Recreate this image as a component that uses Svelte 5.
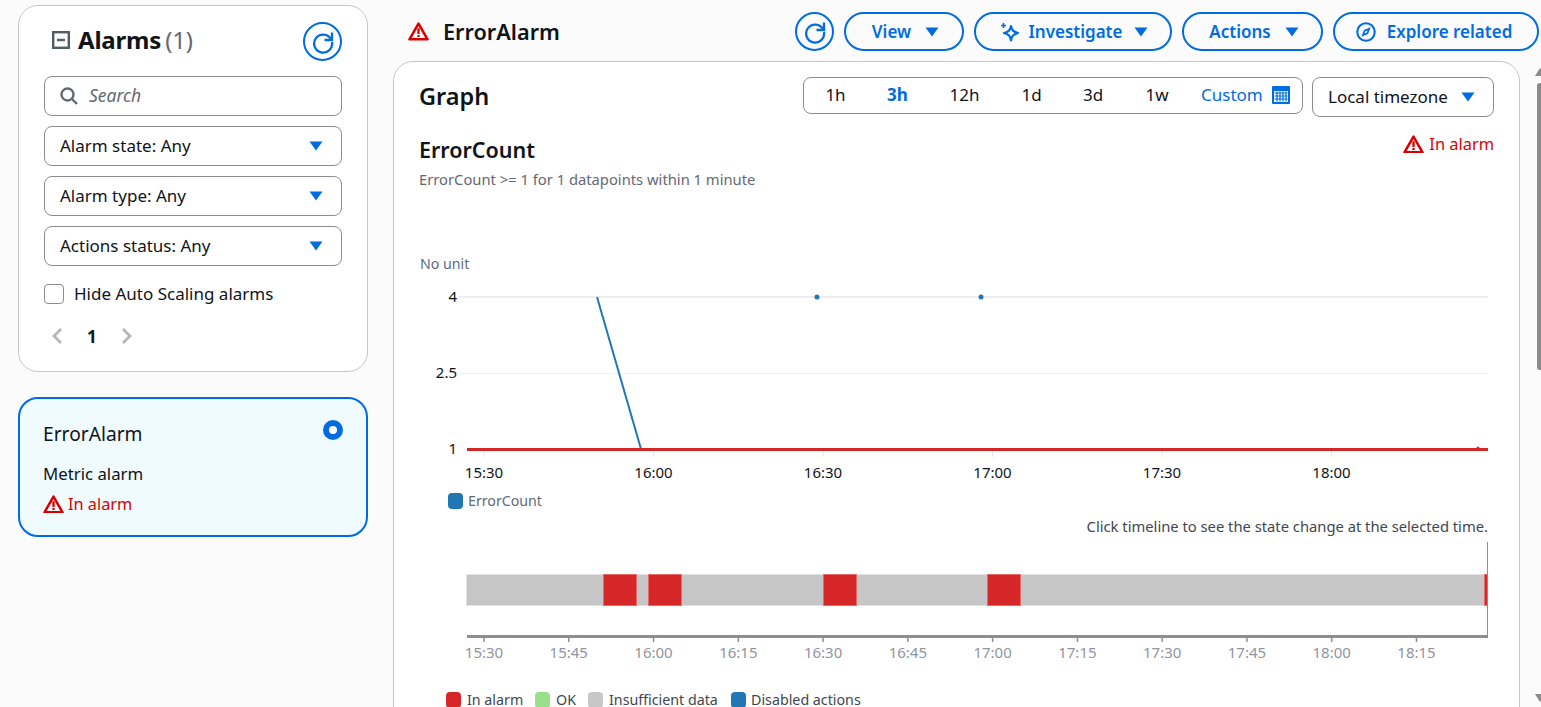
<script>
  const filters = ['Alarm state: Any', 'Alarm type: Any', 'Actions status: Any'];
  const ranges = [
    { label: '1h', w: 65 }, { label: '3h', w: 59, active: true }, { label: '12h', w: 75 },
    { label: '1d', w: 59 }, { label: '3d', w: 64 }, { label: '1w', w: 64 }
  ];
  const axisTop = [['15:30', 484], ['16:00', 653.5], ['16:30', 823], ['17:00', 992.5], ['17:30', 1162], ['18:00', 1331.5]];
  const axisBottom = ['15:30', '15:45', '16:00', '16:15', '16:30', '16:45', '17:00', '17:15', '17:30', '17:45', '18:00', '18:15']
    .map((t, i) => [t, 484 + i * 84.77]);
  const reds = [[603, 34], [648, 34], [823, 34], [987, 34], [1484, 4]];
  const legend = [
    ['In alarm', 446, 467, '#d62728'], ['OK', 535, 556, '#98df8a'],
    ['Insufficient data', 588, 609, '#c7c7c7'], ['Disabled actions', 731, 751, '#1f77b4']
  ];
</script>

{#snippet caret()}
  <svg class="caret" viewBox="0 0 14 10" width="14" height="10"><path d="M0.5 0.5h13L7 9.5z" fill="#006ce0" /></svg>
{/snippet}

{#snippet warn(size)}
  <svg viewBox="0 0 20 18" width={size} height={size * 0.9} class="warn">
    <path d="M10 1.6 1.4 16.500h17.200z" fill="none" stroke="#db0000" stroke-width="2.400" stroke-linejoin="round" />
    <path d="M10 6v5.400M10 12.400v2" fill="none" stroke="#db0000" stroke-width="2.200" />
  </svg>
{/snippet}

{#snippet refresh()}
  <button class="round" aria-label="Refresh">
    <svg viewBox="0 0 24 24" width="24" height="24">
      <path d="M20 9.200A9 9 0 1 0 21 12" fill="none" stroke="#006ce0" stroke-width="2.300" />
      <path d="M21 2.500v7.500h-7.500" fill="none" stroke="#006ce0" stroke-width="2.300" />
    </svg>
  </button>
{/snippet}

<div class="page">
  <aside class="side">
    <section class="panel">
      <div class="panel-head">
        <div class="panel-title">
          <svg viewBox="0 0 18 18" width="18" height="18"><rect x="1.200" y="1.200" width="15.600" height="15.600" fill="none" stroke="#545b64" stroke-width="2.400" /><path d="M5 9h8" stroke="#545b64" stroke-width="2.400" /></svg>
          <h2>Alarms <span>(1)</span></h2>
        </div>
        {@render refresh()}
      </div>
      <div class="search">
        <svg viewBox="0 0 18 18" width="18" height="18"><circle cx="7.500" cy="7.500" r="6" fill="none" stroke="#656871" stroke-width="2.400" /><path d="M12 12l5 5" stroke="#656871" stroke-width="2.400" /></svg>
        <span>Search</span>
      </div>
      {#each filters as f}
        <div class="select"><span>{f}</span>{@render caret()}</div>
      {/each}
      <label class="check"><span class="box"></span><span class="check-text">Hide Auto Scaling alarms</span></label>
      <div class="pager">
        <svg viewBox="0 0 12 16" width="12" height="16"><path d="M10 1 3 8l7 7" fill="none" stroke="#b4b4bb" stroke-width="2.600" /></svg>
        <b>1</b>
        <svg viewBox="0 0 12 16" width="12" height="16"><path d="M2 1l7 7-7 7" fill="none" stroke="#b4b4bb" stroke-width="2.600" /></svg>
      </div>
    </section>

    <section class="card">
      <div class="card-head">
        <span class="card-name">ErrorAlarm</span>
        <span class="radio"></span>
      </div>
      <div class="card-type">Metric alarm</div>
      <div class="state">{@render warn(21)}<span>In alarm</span></div>
    </section>
  </aside>

  <main class="main">
    <header class="top">
      <div class="title">{@render warn(21)}<h1>ErrorAlarm</h1></div>
      <div class="actions">
        {@render refresh()}
        <button class="pill view">View {@render caret()}</button>
        <button class="pill investigate">
          <svg viewBox="0 0 20 20" width="20" height="20"><path d="M11 4c.8 4.200 2.200 5.800 7 7-4.800 1.200-6.200 2.800-7 7.500-.8-4.700-2.200-6.300-7-7.500 4.800-1.200 6.200-2.800 7-7z" fill="none" stroke="#006ce0" stroke-width="2.200" stroke-linejoin="round" /><path d="M3.500 1v5M1 3.500h5" stroke="#006ce0" stroke-width="1.600" /></svg>
          Investigate {@render caret()}
        </button>
        <button class="pill act">Actions {@render caret()}</button>
        <button class="pill explore">
          <svg viewBox="0 0 19 19" width="20" height="20"><circle cx="9.500" cy="9.500" r="8.300" fill="none" stroke="#006ce0" stroke-width="2" /><path d="M12.500 6.500 10.800 10.800 6.500 12.500 8.200 8.200z" fill="none" stroke="#006ce0" stroke-width="1.600" /></svg>
          Explore related
        </button>
      </div>
    </header>

    <section class="graph">
      <div class="graph-head">
        <h2>Graph</h2>
        <div class="controls">
          <div class="segment">
            {#each ranges as r}
              <span class="seg" class:active={r.active} style="width:{r.w}px">{r.label}</span>
            {/each}
            <span class="custom">Custom
              <svg viewBox="0 0 18 18" width="18" height="18"><rect x="0" y="0" width="18" height="18" rx="1" fill="#006ce0" /><rect x="2" y="5" width="14" height="11" fill="#fff" /><path d="M2.500 7h13M2.500 10h13M2.500 13h13M5 5.500v10M8 5.500v10M11 5.500v10M14 5.500v10" stroke="#006ce0" stroke-width="1.200" /></svg>
            </span>
          </div>
          <div class="zone"><span>Local timezone</span>{@render caret()}</div>
        </div>
      </div>

      <div class="metric">
        <div>
          <h3>ErrorCount</h3>
          <p>ErrorCount &gt;= 1 for 1 datapoints within 1 minute</p>
        </div>
        <div class="state">{@render warn(21)}<span>In alarm</span></div>
      </div>

      <svg class="chart" viewBox="394 250 1126 457" width="1126" height="457">
        <text x="420" y="269" class="t muted">No unit</text>
        <line x1="459" x2="1488" y1="297" y2="297" stroke="#eeeeee" stroke-width="2" />
        <line x1="459" x2="1488" y1="373.500" y2="373.500" stroke="#eeeeee" />
        <text x="457" y="302" class="t num" text-anchor="end">4</text>
        <text x="457" y="378" class="t num" text-anchor="end">2.5</text>
        <text x="457" y="454" class="t num" text-anchor="end">1</text>

        {#each axisTop as [label, x]}
          <line x1={x} x2={x} y1="451" y2="457" stroke="#e6e6e6" />
          <text {x} y="478" class="t num" text-anchor="middle">{label}</text>
        {/each}

        <line x1="597" y1="297" x2="641" y2="449" stroke="#1f77b4" stroke-width="2" />
        <circle cx="817" cy="297" r="2.500" fill="#1f77b4" />
        <circle cx="981" cy="297" r="2.500" fill="#1f77b4" />
        <rect x="467" y="448" width="1021" height="3" fill="#d62728" />
        <circle cx="1478" cy="448" r="1.500" fill="#d62728" />

        <rect x="448" y="493" width="15" height="16" rx="4" fill="#1f77b4" />
        <text x="468" y="506" class="t muted">ErrorCount</text>

        <text x="1488" y="532" class="t dim long" text-anchor="end">Click timeline to see the state change at the selected time.</text>

        <rect x="466.500" y="574.500" width="1021" height="31" fill="#c6c6c6" stroke="#e2e2e2" />
        {#each reds as [x, w]}
          <rect x={x + 0.5} y="574.500" width={w - 1} height="31" fill="#d62728" stroke="#ea6a6b" />
        {/each}

        <line x1="1487.500" x2="1487.500" y1="542" y2="636" stroke="#8d8d94" />
        <rect x="467" y="635" width="1021" height="3" fill="#8d8d94" />
        {#each axisBottom as [label, x]}
          <line x1={x} x2={x} y1="637" y2="642" stroke="#8d8d94" stroke-width="1.500" />
          <text {x} y="658" class="t faint num" text-anchor="middle">{label}</text>
        {/each}

        {#each legend as [label, x, tx, color]}
          <rect {x} y="692" width="15" height="16" rx="4" fill={color} />
          <text x={tx} y="705" class="t dim leg">{label}</text>
        {/each}
      </svg>
    </section>
  </main>

  <div class="scrollbar">
    <span class="up"></span>
    <span class="thumb"></span>
    <span class="down"></span>
  </div>
</div>

<style>
  :global(body) {
    margin: 0;
    background: #fbfbfb;
    overflow: hidden;
  }
  .page {
    display: flex;
    position: relative;
    width: 1541px;
    height: 707px;
    overflow: hidden;
    background: #fbfbfb;
    color: #0f141a;
    font-family: "Noto Sans", "Open Sans", sans-serif;
    font-size: 17px;
    box-sizing: border-box;
    padding-left: 18px;
  }
  h1, h2, h3, p { margin: 0; }
  button { font: inherit; background: none; padding: 0; cursor: pointer; }

  .side {
    flex: 0 0 350px;
    padding-top: 5px;
    display: flex;
    flex-direction: column;
    gap: 25px;
  }
  .panel {
    box-sizing: border-box;
    height: 367px;
    flex: none;
    background: #fff;
    border: 1px solid #c6c6cd;
    border-radius: 20px;
    padding: 16px 25px 0;
  }
  .panel-head {
    display: flex;
    justify-content: space-between;
    align-items: center;
    height: 39px;
    margin-bottom: 15px;
  }
  .panel-title {
    display: flex;
    align-items: center;
    gap: 8px;
    padding-left: 8px;
    margin-top: -4px;
  }
  .panel-title h2 { font-size: 24px; font-weight: 700; line-height: 30px; letter-spacing: -0.2px; word-spacing: -2px; }
  .panel-title h2 span { font-weight: 400; color: #656871; }
  .round {
    box-sizing: border-box;
    width: 39px;
    height: 39px;
    flex: none;
    border: 2px solid #006ce0;
    border-radius: 50%;
    display: flex;
    align-items: center;
    justify-content: center;
  }
  .search, .select, .zone {
    box-sizing: border-box;
    display: flex;
    align-items: center;
    height: 40px;
    border: 1px solid #8c8c94;
    border-radius: 8px;
    background: #fff;
  }
  .search span, .select span, .zone span, .check-text { margin-top: -2px; }
  .search { padding-left: 15px; gap: 11px; margin-bottom: 10px; }
  .search span { font-style: italic; color: #656871; font-size: 17.500px; }
  .select { justify-content: space-between; padding: 0 18px 0 15px; margin-bottom: 10px; }
  .check {
    display: flex;
    align-items: center;
    gap: 10px;
    margin-top: 18px;
    height: 20px;
  }
  .box {
    box-sizing: border-box;
    width: 20px;
    height: 20px;
    border: 1px solid #8c8c94;
    border-radius: 4px;
  }
  .pager {
    display: flex;
    align-items: center;
    gap: 24px;
    padding-left: 7px;
    margin-top: 22px;
    height: 20px;
  }
  .pager b { font-size: 17px; }
  .card {
    box-sizing: border-box;
    height: 140px;
    flex: none;
    background: #f0fbff;
    border: 2px solid #006ce0;
    border-radius: 20px;
    padding: 21px 23px 0;
  }
  .card-head { display: flex; justify-content: space-between; align-items: flex-start; height: 28px; }
  .card-name { font-size: 19.200px; line-height: 28px; }
  .radio {
    box-sizing: border-box;
    width: 20px;
    height: 20px;
    border: 6px solid #006ce0;
    border-radius: 50%;
    background: #fff;
  }
  .card-type { margin-top: 14px; line-height: 24px; font-size: 16.800px; }
  .state {
    display: flex;
    align-items: center;
    gap: 4px;
    color: #db0000;
    line-height: 24px;
    font-size: 16.300px;
  }
  .card .state { margin-top: 6px; }
  .warn { flex: none; }

  .main { flex: 0 0 1127px; margin-left: 25px; display: flex; flex-direction: column; }
  .top {
    position: relative;
    flex: none;
    display: flex;
    height: 61px;
    width: 1146px;
    box-sizing: border-box;
    padding-top: 12px;
    justify-content: space-between;
  }
  .title { display: flex; align-items: center; gap: 14px; padding-left: 15px; height: 39px; }
  .title h1 { font-size: 21.700px; font-weight: 600; }
  .actions { display: flex; gap: 10px; }
  .pill {
    box-sizing: border-box;
    height: 39px;
    border: 2px solid #006ce0;
    border-radius: 20px;
    color: #006ce0;
    font-weight: 600;
    display: flex;
    align-items: center;
    justify-content: center;
    gap: 8px;
    white-space: nowrap;
  }
  .pill .caret { margin-left: 6px; }
  .view { width: 120px; padding-left: 3px; }
  .investigate { width: 198px; padding-left: 2px; gap: 9px; }
  .investigate .caret { margin-left: 3px; }
  .act { width: 141px; padding-left: 3px; }
  .explore { width: 206px; gap: 11px; padding-right: 4px; }

  .graph {
    box-sizing: border-box;
    flex: none;
    height: 700px;
    width: 1127px;
    background: #fff;
    border: 1px solid #c6c6cd;
    border-radius: 20px;
    padding: 15px 25px 0 25px;
  }
  .graph-head { display: flex; justify-content: space-between; align-items: flex-start; height: 40px; }
  .graph-head h2 { font-size: 23.500px; font-weight: 600; line-height: 38px; }
  .controls { display: flex; gap: 9px; align-items: flex-start; }
  .segment {
    box-sizing: border-box;
    display: flex;
    align-items: center;
    height: 37px;
    width: 500px;
    border: 1px solid #8c8c94;
    border-radius: 8px;
  }
  .seg { text-align: center; margin-top: -2px; }
  .seg:first-child { margin-left: -1px; }
  .seg.active { color: #006ce0; font-weight: 700; }
  .custom { display: flex; align-items: center; gap: 9px; color: #006ce0; padding-left: 12px; margin-top: -2px; font-size: 17px; white-space: nowrap; }
  .zone { width: 182px; justify-content: space-between; padding: 0 18px 0 15px; }
  .metric {
    display: flex;
    justify-content: space-between;
    align-items: flex-start;
    margin-top: 19px;
    height: 0;
  }
  .metric h3 { font-size: 21.500px; font-weight: 600; line-height: 28px; }
  .metric p { font-size: 14.750px; line-height: 18px; margin-top: 6px; color: #656871; }
  .metric .state { margin-top: -4px; white-space: nowrap; gap: 5px; font-size: 16.400px; }
  .chart {
    display: block;
    position: absolute;
    left: 394px;
    top: 250px;
  }
  .t { font-size: 14.200px; fill: #0f141a; font-family: "Noto Sans", sans-serif; }
  .num { font-size: 15px; }
  .long { font-size: 14.750px; }
  .leg { font-size: 14.250px; }
  .muted { fill: #5f6b7a; }
  .dim { fill: #424650; }
  .faint { fill: #8f959e; }

  .scrollbar {
    position: absolute;
    top: 62px;
    right: 0;
    bottom: 0;
    width: 7px;
  }
  .up, .down { position: absolute; width: 0; height: 0; left: 1px; border-left: 5px solid transparent; border-right: 5px solid transparent; }
  .up { top: 6px; border-bottom: 8px solid #8a8a8a; }
  .down { bottom: 5px; border-top: 8px solid #8a8a8a; }
  .thumb { position: absolute; left: 3px; top: 21px; height: 287px; width: 4px; background: #8a8a8a; border-radius: 3px 0 0 3px; }
</style>
